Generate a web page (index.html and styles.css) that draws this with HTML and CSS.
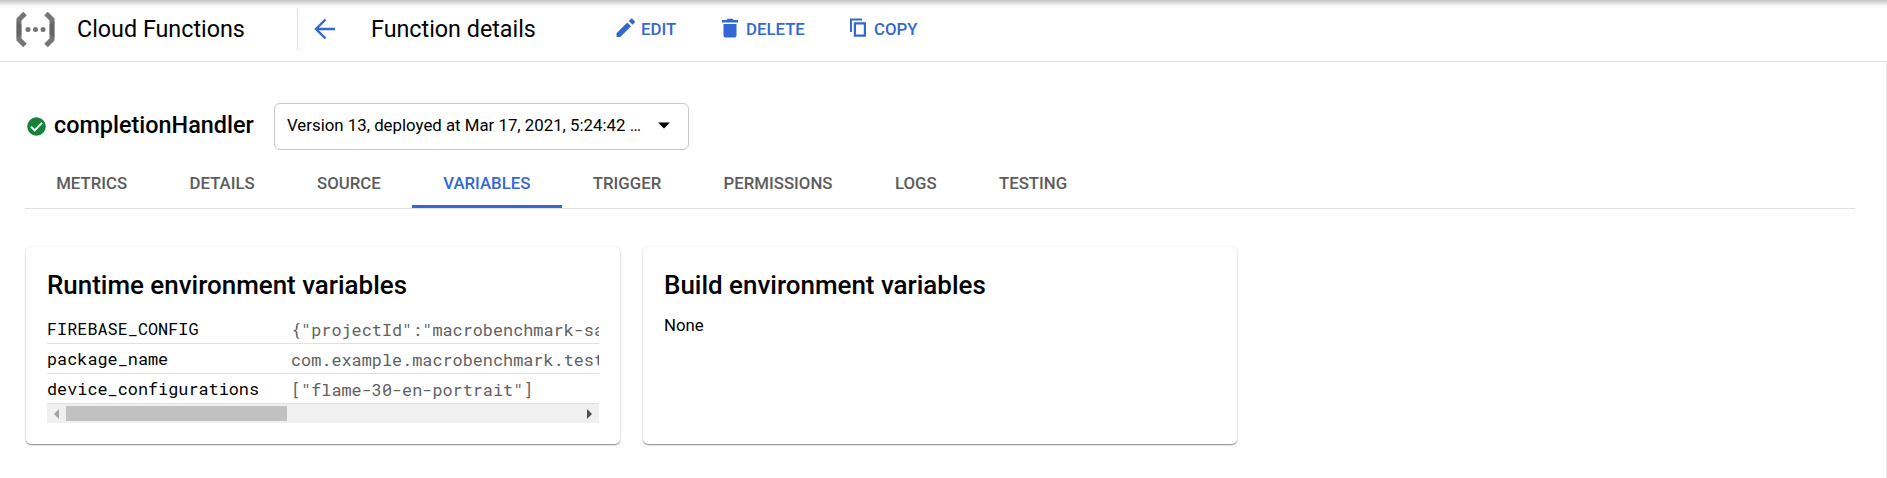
FILE: index.html
```html
<!DOCTYPE html>
<html lang="en">
<head>
<meta charset="utf-8">
<title>Function details</title>
<link rel="stylesheet" href="styles.css">
</head>
<body>
<header class="topbar">
  <svg class="logo" width="39" height="36" viewBox="0 0 39 36">
    <path d="M9 1.500L3 7.500v20l6 6M30 1.500L36 7.500v20l-6 6" fill="none" stroke="#757575" stroke-width="5"/>
    <path d="M0.500 9L5.500 13v9L0.500 26zM38.500 9L33.500 13v9l5 4z" fill="#555" opacity=".5"/>
    <g fill="#757575"><circle cx="12" cy="17.500" r="2.500"/><circle cx="19.500" cy="17.500" r="2.500"/><circle cx="27" cy="17.500" r="2.500"/></g>
  </svg>
  <span class="product">Cloud Functions</span>
  <div class="heading">
    <svg class="back" width="21" height="22" viewBox="0 0 21 22"><path d="M21 11H2M11.500 1.500L2 11l9.500 9.500" fill="none" stroke="#3367d6" stroke-width="2.400"/></svg>
    <span class="page-title">Function details</span>
  </div>
  <nav class="actions">
    <a class="action edit"><svg width="20" height="20" viewBox="0 0 20 20"><path d="M.5 15.200V19h3.800L15 8.300l-3.800-3.800zM18.700 4.600a1 1 0 0 0 0-1.400l-2.400-2.400a1 1 0 0 0-1.400 0L12.800 2.900 16.600 6.700z"/></svg><span>EDIT</span></a>
    <a class="action delete"><svg width="16" height="20" viewBox="0 0 16 20"><path d="M1.500 6h13v11.500a2 2 0 0 1-2 2h-9a2 2 0 0 1-2-2zM0 2h4.500l1-1.200h5l1 1.200H16v2.400H0z"/></svg><span>DELETE</span></a>
    <a class="action copy"><svg width="16" height="20" viewBox="0 0 16 20"><path d="M12 .5v2H2v11.500H0V.5zM3.800 4.200H16v14.500H3.800zm2.200 2.200v10.100h7.800V6.400z" fill-rule="evenodd"/></svg><span>COPY</span></a>
  </nav>
</header>
<main class="content">
  <div class="function-row">
    <svg class="status" width="19" height="19" viewBox="0 0 19 19"><circle cx="9.500" cy="9.500" r="9.300" fill="#188038"/><path d="M4 9.700l3.700 3.600L15 5.900" fill="none" stroke="#fff" stroke-width="1.900"/></svg>
    <h1 class="name">completionHandler</h1>
    <div class="version"><span class="version-text">Version 13, deployed at Mar 17, 2021, 5:24:42 …</span><svg width="12" height="7" viewBox="0 0 12 7"><path d="M0 .5h12L6 6.500z"/></svg></div>
  </div>
  <nav class="tabs">
    <a class="tab">METRICS</a><a class="tab">DETAILS</a><a class="tab">SOURCE</a><a class="tab active">VARIABLES</a><a class="tab">TRIGGER</a><a class="tab">PERMISSIONS</a><a class="tab">LOGS</a><a class="tab">TESTING</a>
  </nav>
  <div class="cards">
    <section class="card">
      <h2 class="card-title">Runtime environment variables</h2>
      <div class="vars">
        <div class="row"><span class="key">FIREBASE_CONFIG</span><span class="value">{"projectId":"macrobenchmark-sa</span></div>
        <div class="row"><span class="key">package_name</span><span class="value">com.example.macrobenchmark.test</span></div>
        <div class="row"><span class="key">device_configurations</span><span class="value">["flame-30-en-portrait"]</span></div>
      </div>
      <div class="scrollbar">
        <svg width="5" height="10" viewBox="0 0 5 10"><path d="M5 0v10L0 5z" fill="#a3a3a3"/></svg>
        <div class="thumb"></div>
        <svg class="right" width="5" height="10" viewBox="0 0 5 10"><path d="M0 0v10L5 5z" fill="#505050"/></svg>
      </div>
    </section>
    <section class="card">
      <h2 class="card-title">Build environment variables</h2>
      <p class="none">None</p>
    </section>
  </div>
</main>
</body>
</html>
```
FILE: styles.css
```css
* { box-sizing: border-box; }
body { margin: 0; height: 478px; overflow: hidden; display: flex; flex-direction: column; background: #fff; color: #000; font-family: Roboto, sans-serif; }
svg { display: block; flex: none; }
.topbar { height: 62px; flex: none; display: flex; padding-top: 9px; border-bottom: 1px solid #e0e0e0; background: linear-gradient(#c4c4c4, #e0e0e0 3px, #fafafa 6px, #fff 8px); white-space: nowrap; }
.logo { margin: 3px 0 0 16px; }
.product { width: 220px; flex: none; margin-left: 22px; font-size: 23.3px; line-height: 40px; }
.heading { height: 41px; display: flex; border-left: 1px solid #e0e0e0; }
.back { margin: 9px 0 0 16px; }
.page-title { width: 245px; flex: none; margin-left: 36px; font-size: 23.3px; line-height: 40px; }
.actions { display: flex; height: 37px; color: #3367d6; fill: #3367d6; font-size: 16.8px; font-weight: 500; }
.action { display: flex; align-items: center; }
.action span { padding-top: 2px; }
.edit { width: 106px; gap: 5px; }
.delete { width: 128px; gap: 8px; }
.copy { gap: 8px; }
.content { flex: 1; padding: 41px 31px 0 25px; border-right: 1px solid #f0f0f0; }
.function-row { display: flex; align-items: center; height: 47px; }
.status { margin-left: 2px; }
.name { width: 220px; margin: 0 0 3px 8px; font-size: 23.4px; font-weight: 500; }
.version { width: 415px; height: 47px; display: flex; align-items: center; justify-content: space-between; padding: 0 18px 2px 12px; border: 1px solid #c6c6c6; border-radius: 6px; font-size: 16.82px; white-space: nowrap; }
.version-text { padding-bottom: 2px; }
.tabs { display: flex; height: 59px; border-bottom: 1px solid #e0e0e0; font-size: 16.8px; font-weight: 500; color: #5c5c5c; }
.tab { height: 58px; padding: 0 31.2px; line-height: 67px; }
.active { color: #3367d6; border-bottom: 3px solid #3367d6; }
.cards { display: flex; gap: 23px; margin: 38px 0 0 1px; }
.card { width: 594px; height: 197px; padding: 21px 21px 0; border-radius: 5px; box-shadow: 0 1px 1px rgba(0,0,0,.35), 0 1px 3px rgba(0,0,0,.16); }
.card-title { margin: 0; font-size: 25.95px; line-height: 34px; font-weight: 500; white-space: nowrap; }
.vars { margin-top: 12px; overflow: hidden; font-family: "Roboto Mono", "DejaVu Sans Mono", monospace; font-size: 16.83px; white-space: nowrap; }
.row { display: flex; height: 30px; line-height: 30px; border-bottom: 1px solid #e0e0e0; }
.key { width: 244px; flex: none; }
.value { color: #616161; padding-top: 1px; }
.scrollbar { display: flex; align-items: center; height: 19px; padding: 0 7px; background: #f0f0f0; }
.thumb { width: 221px; height: 15px; margin-left: 7px; background: #c1c1c1; }
.right { margin-left: auto; }
.none { margin: 11px 0 0; font-size: 16.8px; line-height: 24px; }
```
